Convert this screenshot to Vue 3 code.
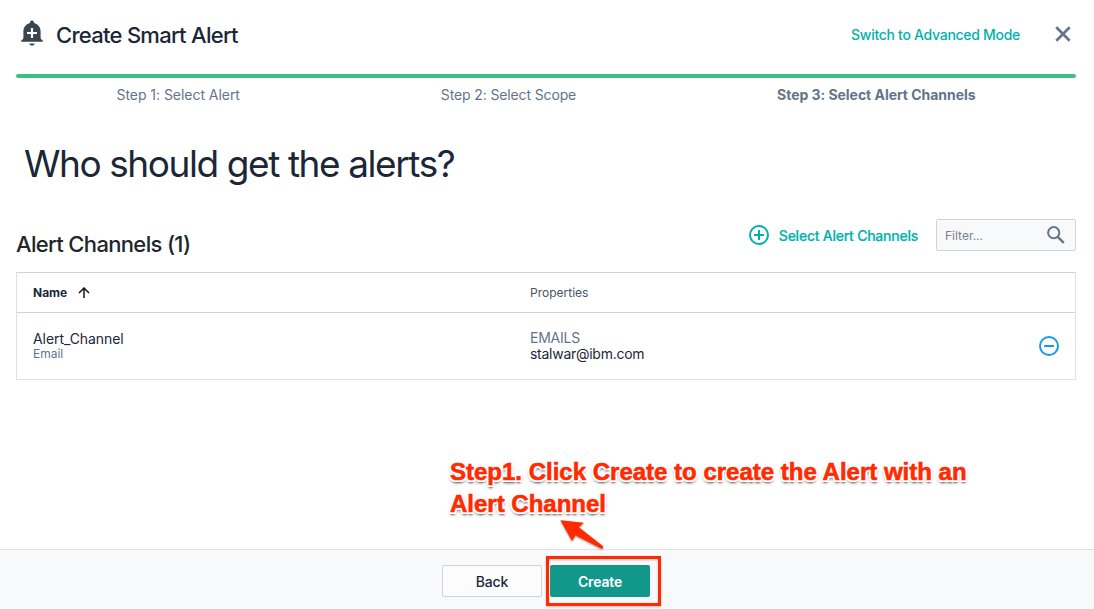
<script setup>
const steps = [
  { label: 'Step 1: Select Alert', cls: 's1' },
  { label: 'Step 2: Select Scope', cls: 's2' },
  { label: 'Step 3: Select Alert Channels', cls: 's3' },
]
const channels = [
  { name: 'Alert_Channel', type: 'Email', key: 'EMAILS', value: 'stalwar@ibm.com' },
]
</script>

<template>
  <div class="dialog">
    <header class="head">
      <svg class="bell" width="24" height="28" viewBox="0 0 24 28">
        <path fill="#3b444f" d="M12 0.600c1.200 0 2 .8 2 1.900v.6c3.800.9 6.600 4.200 6.600 8.200v7.200l2.300 2.300v.9H1.100v-.9l2.300-2.300v-7.200c0-4 2.800-7.300 6.600-8.200v-.6c0-1.100.8-1.900 2-1.900zM9.400 23.400h5.200c-.2 1.300-1.200 2.200-2.600 2.200s-2.400-.9-2.600-2.200z" />
        <path stroke="#fff" stroke-width="2.200" d="M12 8v10M7 13h10" />
      </svg>
      <h1 class="title">Create Smart Alert</h1>
      <a class="switch">Switch to Advanced Mode</a>
      <svg class="close" width="16" height="16" viewBox="0 0 16 16">
        <path d="M1.300 1.300l13.400 13.400M14.700 1.300L1.300 14.700" stroke="#64748b" stroke-width="2.700" fill="none" />
      </svg>
    </header>
    <div class="progress"></div>
    <div class="steps">
      <div v-for="s in steps" :key="s.cls" :class="['step', s.cls]">{{ s.label }}</div>
    </div>
    <h2 class="question">Who should get the alerts?</h2>
    <div class="toolbar">
      <h3 class="subtitle">Alert Channels (1)</h3>
      <svg class="plus" width="20" height="20" viewBox="0 0 20 20" fill="none" stroke="#00b2ac" stroke-width="2">
        <circle cx="10" cy="10" r="9" /><path d="M10 5v10M5 10h10" />
      </svg>
      <a class="select">Select Alert Channels</a>
      <div class="filter">
        <span class="placeholder">Filter...</span>
        <svg width="18" height="18" viewBox="0 0 18 18" fill="none" stroke="#64748b">
          <circle cx="6.700" cy="6.700" r="5.600" stroke-width="2" /><path d="M10.800 10.800l6 6" stroke-width="2.400" />
        </svg>
      </div>
    </div>
    <div class="table">
      <div class="row thead">
        <div class="cell name"><span class="label">Name</span>
          <svg width="12" height="12" viewBox="0 0 12 12" fill="none" stroke="#15191d" stroke-width="1.500">
            <path d="M6 11V1.400M1 6l5-5 5 5" />
          </svg>
        </div>
        <div class="cell props">Properties</div>
      </div>
      <div v-for="c in channels" :key="c.name" class="row body">
        <div class="cell">
          <div class="cname">{{ c.name }}</div>
          <div class="ctype">{{ c.type }}</div>
        </div>
        <div class="cell">
          <div class="pkey">{{ c.key }}</div>
          <div class="pval">{{ c.value }}</div>
        </div>
        <svg class="minus" width="20" height="20" viewBox="0 0 20 20" fill="none" stroke="#159ce4" stroke-width="2">
          <circle cx="10" cy="10" r="9" /><path d="M5 10h10" />
        </svg>
      </div>
    </div>
    <footer class="foot">
      <button class="btn back">Back</button>
      <button class="btn create">Create</button>
    </footer>
    <div class="note">Step1. Click Create to create the Alert with an<br />Alert Channel</div>
    <svg class="arrow" width="60" height="44" viewBox="0 0 60 44">
      <path fill="#ff2a00" d="M5.400 5.300L28.800 7.800 23.900 12.300 47.500 30.700Q49.300 33 46.500 33.800L20.500 20.600 17 26Z" />
    </svg>
    <div class="highlight"></div>
  </div>
</template>

<style>
body { margin: 0; background: #fff; }
</style>

<style scoped>
.dialog {
  position: relative;
  display: flex;
  flex-direction: column;
  width: 1094px;
  height: 609px;
  overflow: hidden;
  background: #fff;
  color: #1b2737;
  font-family: Inter, "Liberation Sans", sans-serif;
}
h1, h2, h3 { margin: 0; font-weight: 400; white-space: nowrap; }
.head { display: flex; align-items: center; height: 70px; padding: 0 23px 4px 20px; }
.head, .steps, .toolbar, .table, .foot { box-sizing: border-box; flex: none; }
.title { margin-left: 12px; font-size: 22px; font-weight: 500; letter-spacing: -0.72px; line-height: 28px; padding-top: 4px; }
.switch { margin-left: auto; margin-right: 35px; padding-top: 2px; font-size: 14px; font-weight: 500; color: #00b2ac; letter-spacing: -0.29px; }
.bell { flex: none; padding-top: 2px; }
.close { padding-top: 2px; }
.progress { flex: none; height: 4px; margin: 4px 18px 0 16px; border-radius: 2px; background: #3bc17d; }
.steps { display: flex; justify-content: space-around; margin: 0 18px 0 16px; height: 34px; line-height: 34px; font-size: 14px; color: #64748b; }
.step { white-space: nowrap; }
.s1 { letter-spacing: -0.04px; }
.s2 { letter-spacing: -0.13px; }
.s3 { font-weight: 700; letter-spacing: -0.04px; }
.question { height: 52px; margin: 26px 0 0 24px; font-size: 37px; line-height: 52px; letter-spacing: -1.42px; }
.toolbar { display: flex; align-items: center; height: 32px; margin: 29px 18px 0 16px; }
.subtitle { margin-right: auto; padding-top: 17px; font-size: 22px; font-weight: 500; letter-spacing: -0.66px; color: #20262a; }
.select { margin: 1px 18px 0 10px; font-size: 14px; font-weight: 500; letter-spacing: -0.24px; color: #00b2ac; -webkit-text-stroke: 0.2px #00b2ac; }
.filter { display: flex; align-items: center; justify-content: space-between; box-sizing: border-box; width: 140px; height: 32px; padding: 0 10px 0 8px; border: 1px solid #cfd4da; border-radius: 2px; background: #f8f9fb; }
.placeholder { font-size: 12px; color: #7b838d; }
.table { margin: 21px 18px 0 16px; height: 108px; border: 1px solid #dde1e5; border-top-color: #d0d4d8; }
.row { display: grid; grid-template-columns: 497px 1fr auto; padding: 0 16px; }
.thead { height: 39px; align-items: center; border-bottom: 1px solid #d0d4d8; font-size: 12px; }
.name { display: flex; align-items: center; font-weight: 700; }
.name svg { margin-left: 11px; }
.props { color: #485362; }
.body { height: 66px; align-items: center; line-height: 16px; font-size: 14px; }
.cname { line-height: 15px; letter-spacing: -0.07px; }
.ctype { padding-top: 1px; font-size: 12px; line-height: 14px; color: #64748b; }
.pkey { color: #64748b; letter-spacing: -0.25px; }
.pval { letter-spacing: -0.27px; }
.foot { display: flex; justify-content: center; gap: 8px; height: 60px; margin-top: auto; padding-top: 15px; padding-right: 2px; border-top: 1px solid #dde1e5; background: #f8f9fb; }
.btn { box-sizing: border-box; width: 100px; height: 32px; padding: 0; border-radius: 2px; font: 500 14px Inter, sans-serif; letter-spacing: -0.15px; }
.back { border: 1px solid #cfd4da; background: #fcfcfd; color: #1b2737; }
.create { border: 0; background: #12978b; color: #fff; font-weight: 600; }
.note {
  position: absolute; left: 450px; top: 456px; font: 700 24px/32px "Liberation Sans", Arial, sans-serif; color: #ff2a00; white-space: nowrap;
  -webkit-text-stroke: 0.6px #ff2a00;
  text-shadow: 2px 0 #fff, -2px 0 #fff, 0 2px #fff, 0 -2px #fff, 1.500px 1.500px #fff, -1.500px 1.500px #fff, 1.500px -1.500px #fff, -1.500px -1.500px #fff, 0 3px 2px #666, 0 2px 4px #888;
}
.arrow { position: absolute; left: 555px; top: 515px; filter: drop-shadow(0 1px 1px #999); }
.highlight { position: absolute; box-sizing: border-box; left: 546px; top: 556px; width: 115px; height: 50px; border: 3px solid #ff2a00; filter: drop-shadow(0 1px 1px #bbb); }
</style>
